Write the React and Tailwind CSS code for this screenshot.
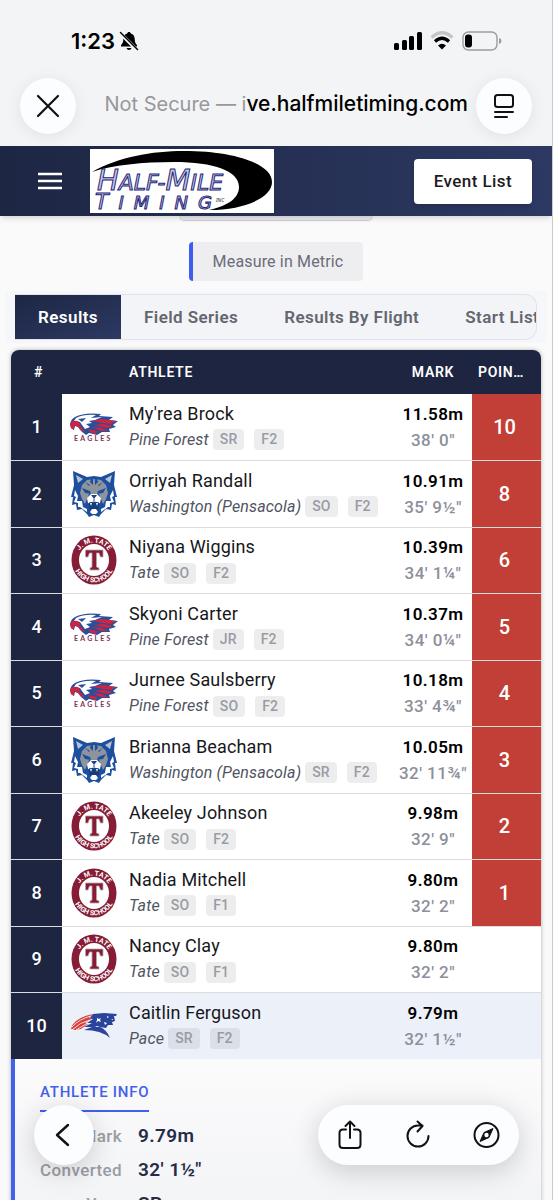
import { useState } from "react";

const results = [
  { place: 1, team: "eagles", name: "My'rea Brock", school: "Pine Forest", year: "SR", flight: "F2", mark: "11.58m", converted: "38' 0\"", points: 10 },
  { place: 2, team: "wildcats", name: "Orriyah Randall", school: "Washington (Pensacola)", year: "SO", flight: "F2", mark: "10.91m", converted: "35' 9½\"", points: 8 },
  { place: 3, team: "tate", name: "Niyana Wiggins", school: "Tate", year: "SO", flight: "F2", mark: "10.39m", converted: "34' 1¼\"", points: 6 },
  { place: 4, team: "eagles", name: "Skyoni Carter", school: "Pine Forest", year: "JR", flight: "F2", mark: "10.37m", converted: "34' 0¼\"", points: 5 },
  { place: 5, team: "eagles", name: "Jurnee Saulsberry", school: "Pine Forest", year: "SO", flight: "F2", mark: "10.18m", converted: "33' 4¾\"", points: 4 },
  { place: 6, team: "wildcats", name: "Brianna Beacham", school: "Washington (Pensacola)", year: "SR", flight: "F2", mark: "10.05m", converted: "32' 11¾\"", points: 3 },
  { place: 7, team: "tate", name: "Akeeley Johnson", school: "Tate", year: "SO", flight: "F2", mark: "9.98m", converted: "32' 9\"", points: 2 },
  { place: 8, team: "tate", name: "Nadia Mitchell", school: "Tate", year: "SO", flight: "F1", mark: "9.80m", converted: "32' 2\"", points: 1 },
  { place: 9, team: "tate", name: "Nancy Clay", school: "Tate", year: "SO", flight: "F1", mark: "9.80m", converted: "32' 2\"" },
  { place: 10, team: "pace", name: "Caitlin Ferguson", school: "Pace", year: "SR", flight: "F2", mark: "9.79m", converted: "32' 1½\"" },
];

const tabs = ["Results", "Field Series", "Results By Flight", "Start List"];

function EaglesLogo() {
  return (
    <svg className="w-12 h-12" viewBox="0 0 48 48" role="img" aria-label="Pine Forest Eagles">
      <path d="M0 21 Q1 16 5 14 Q14 9 31 11 L29 13 L43 14 L39 17 L48 18 L43 22 L46 24 L39 26 L40 29 L32 29 L27 32 L19 30 L16 32 L11 28 L8 24 L5 23 L4 27 L1 25 Z" fill="#284f9c" />
      <path d="M6 15 Q14 11 26 12 L21 15 L32 14 L25 17 L19 18 L22 20 L16 21 L20 24 L15 26 L12 22 L10 19 L4 18 Z" fill="#fff" />
      <path d="M8 16 L16 15 L12 19 Z" fill="#2c4f8f" />
      <path d="M0 21 Q2 17 8 18 L10 21 L9 22 L14 27 L13 29 L8 24 L4 22 L4 27 L1 25 Z" fill="#cf2440" />
      <path d="M22 18 L32 16 L46 18 L41 21 L33 20 Z M24 22 L33 21 L43 23 L38 25 L33 24 Z M22 24 L32 25 L38 28 L31 28 Z M18 26 L27 28 L26 31 L20 29 Z" fill="#d3243f" />
      <text x="4" y="38" fontSize="7" letterSpacing="2.200" fontFamily="Lato, sans-serif" fontWeight="700" fill="#7b3358">EAGLES</text>
    </svg>
  );
}

function WildcatsLogo() {
  return (
    <svg className="w-12 h-12" viewBox="0 0 48 48" role="img" aria-label="Washington Wildcats">
      <path d="M3 1 L17 7 L24 6 L31 7 L45 1 L44 15 L47 27 L45 27 L46 35 L42 34 L41 40 L36 39 L31 44 L29 47 L24 45 L19 47 L17 44 L12 39 L7 40 L6 34 L2 35 L3 27 L1 27 L4 15 Z" fill="#1c4f9f" />
      <path d="M6 5 L13 9 L8 13 Z M42 5 L35 9 L40 13 Z" fill="#b7c3d4" />
      <path d="M5 20 L8 26 L7 31 L12 31 L13 37 L17 39 L17 42 L10 37 L8 37 L8 33 L4 32 L6 27 L4 26 Z M43 20 L40 26 L41 31 L36 31 L35 37 L31 39 L31 42 L38 37 L40 37 L40 33 L44 32 L42 27 L44 26 Z" fill="#fff" />
      <path d="M17 10 L24 9 L31 10 L36 15 L38 23 L36 29 L33 34 L31 29 L29 24 L19 24 L17 29 L15 34 L12 29 L10 23 L12 15 Z" fill="#8e949c" />
      <path d="M21 9 h2 v6 l-3 -3z M27 9 h-2 v6 l3 -3z M12 18 l8 3 l1 3 l-6 -1z M36 18 l-8 3 l-1 3 l6 -1z M15 12 l5 3 l-1 1z M33 12 l-5 3 l1 1z" fill="#1c4f9f" />
      <path d="M21 24 h6 l4 4 l-1 5 l-3 1 h-6 l-3 -1 l-1 -5z" fill="#fff" />
      <path d="M21 25 h6 l-3 4z" fill="#194382" />
      <path d="M24 29 v2 M19 33 l5 -1 l5 1 l-1 6 l-2 2 h-4 l-2 -2z" fill="#153e7b" stroke="#153e7b" />
      <path d="M20 33 l1 3 l1 -3z M28 33 l-1 3 l-1 -3z M20 42 l2 -3 h4 l2 3 l-2 2 h-4z" fill="#fff" />
    </svg>
  );
}

function TateLogo() {
  return (
    <svg className="w-12 h-[50px]" viewBox="0 0 48 50" role="img" aria-label="J. M. Tate High School">
      <defs>
        <path id="tate-top" d="M7 25 A17 17.500 0 0 1 41 25" />
        <path id="tate-bottom" d="M2.500 25 A21.500 22.300 0 0 0 45.500 25" />
      </defs>
      <ellipse cx="24" cy="25" rx="22.500" ry="24.500" fill="#861c35" />
      <ellipse cx="24" cy="25" rx="15" ry="16" fill="#fff" />
      <text fontSize="7" fontWeight="700" fontFamily="Roboto, sans-serif" fill="#fff" textAnchor="middle">
        <textPath href="#tate-top" startOffset="50%">J. M. TATE</textPath>
      </text>
      <text fontSize="7" fontWeight="700" fontFamily="Roboto, sans-serif" fill="#fff" textAnchor="middle">
        <textPath href="#tate-bottom" startOffset="50%">HIGH SCHOOL</textPath>
      </text>
      <path d="M15.500 15 H33 V22 H30.500 L29 18 H26.500 V32 L29 33 V35 H20 V33 L22 32 V18 H19.500 L18 22 H15.500 Z" fill="#861c35" stroke="#b6a4aa" strokeWidth="0.800" />
    </svg>
  );
}

function PaceLogo() {
  return (
    <svg className="w-12 h-12" viewBox="0 0 48 48" role="img" aria-label="Pace Patriots">
      <path d="M1 27 Q3 16 23 12 L19 16 L23 16 L15 21 L18 22 L11 27 L5 28 Z" fill="#d9413d" />
      <path d="M2 25 Q9 17 21 14 M2 28 Q10 20 20 18 M6 28 L18 21" stroke="#fff" strokeWidth="0.800" fill="none" />
      <path d="M23 12 L34 11 L47 12 L46 14 L44 14 L45 19 L42 20 L43 23 L38 23 L36 26 L30 25 Q37 28 40 36 Q31 28 14 28 L22 25 L14 25 L22 21 L17 21 L23 17 L20 16 Z" fill="#2b449b" />
      <path d="M27 16 l2 1 l2 -1 l-1 2 l1 2 l-3 -1 l-2 2 l1 -3z M37 14 l2 1 l-2 1z M34 20 l3 1 l-2 2z M25 24 l5 0 l-3 1z M41 17 h2 v1z" fill="#fff" />
    </svg>
  );
}

function TeamLogo({ team }) {
  if (team === "eagles") return <EaglesLogo />;
  if (team === "wildcats") return <WildcatsLogo />;
  if (team === "tate") return <TateLogo />;
  return <PaceLogo />;
}

function HalfMileLogo() {
  return (
    <svg className="w-[184px] h-16 bg-white overflow-visible" viewBox="0 0 184 64" role="img" aria-label="Half-Mile Timing">
      <path d="M2 23 C28 8 62 2 94 2 C145 2 182 15 182 33 C182 49 154 61 119 61 C138 57 149 49 149 38 C149 22 124 13 84 13 C53 13 22 16 2 23 Z" fill="#000" />
      <g fontFamily="DejaVu Sans, sans-serif" fontStyle="italic" fill="#c9c9dc" stroke="#23237c" strokeWidth="1">
        <text x="7" y="41" fontSize="22">
          <tspan fontSize="29">H</tspan>ALF-<tspan fontSize="29">M</tspan>ILE
        </text>
        <text x="5" y="60" fontSize="18" letterSpacing="10">
          <tspan fontSize="22">T</tspan>IMING
        </text>
      </g>
      <text x="126" y="53" fontSize="5" fontStyle="italic" fontFamily="Noto Sans, sans-serif" fill="#222">INC</text>
    </svg>
  );
}

function StatusBar() {
  return (
    <div className="flex items-center justify-between pl-[71px] pr-[50px] pt-[26px]">
      <div className="flex items-center gap-1">
        <span className="text-[22px] leading-[30px] font-semibold text-black">1:23</span>
        <svg className="w-5 h-5" viewBox="0 0 20 20" fill="#000" aria-label="Silent">
          <path d="M10 1 C11 1 11.700 1.600 11.800 2.500 C14.500 3.300 15.600 5.500 15.700 8 C15.800 11.500 16.500 12.500 18 14 V15.500 H2 V14 C3.500 12.500 4.200 11.500 4.300 8 C4.400 5.500 5.500 3.300 8.200 2.500 C8.300 1.600 9 1 10 1 Z" />
          <path d="M7.500 17 h5 q-.6 2 -2.500 2 t-2.500 -2z" />
          <path d="M1 2 L18 19" stroke="#f3f4f6" strokeWidth="3.500" />
          <path d="M1.500 1.500 L18.500 18.500" stroke="#000" strokeWidth="1.500" strokeLinecap="round" />
        </svg>
      </div>
      <div className="flex items-center gap-2">
        <svg className="w-7 h-5" viewBox="0 0 28 20" fill="#000" aria-label="Signal">
          <rect x="0" y="12" width="5" height="7" rx="1.500" />
          <rect x="8" y="9" width="5" height="10" rx="1.500" />
          <rect x="15" y="5" width="5" height="14" rx="1.500" />
          <rect x="23" y="1" width="5" height="18" rx="1.500" />
        </svg>
        <svg className="w-6 h-5" viewBox="0 0 24 20" fill="none" aria-label="Wi-Fi">
          <path d="M1.500 6.500 Q12 -3 22.500 6.500" stroke="#c4c5c8" strokeWidth="3.200" />
          <path d="M5 10.500 Q12 4 19 10.500" stroke="#000" strokeWidth="3.200" />
          <path d="M8 14.500 Q12 11 16 14.500 L12 18.500 Z" fill="#000" />
        </svg>
        <svg className="w-10 h-5" viewBox="0 0 40 20" aria-label="Battery">
          <rect x="1" y="1" width="34" height="18" rx="5.500" fill="none" stroke="#9b9ca0" strokeWidth="1.400" />
          <rect x="3" y="3.500" width="7" height="13" rx="3" fill="#000" />
          <path d="M37 7 q2.500 .5 2.500 3 t-2.500 3z" fill="#9b9ca0" />
        </svg>
      </div>
    </div>
  );
}

function BrowserBar() {
  return (
    <div className="flex items-center justify-between px-5 pt-[22px]">
      <button aria-label="Close" className="w-14 h-14 shrink-0 rounded-full bg-[#fcfdff] shadow-[0_2px_16px_rgba(0,0,0,0.08)] flex items-center justify-center">
        <svg className="w-6 h-6" viewBox="0 0 24 24" fill="none" stroke="#111" strokeWidth="2.200" strokeLinecap="round">
          <path d="M2 2 L22 22 M22 2 L2 22" />
        </svg>
      </button>
      <p className="ml-auto mr-2 pb-1 text-[21px] leading-7 font-medium whitespace-nowrap text-black">
        <span className="text-xl font-normal text-[#97989c]">Not Secure — i</span>ve.halfmiletiming.com
      </p>
      <button aria-label="Page menu" className="w-14 h-14 shrink-0 rounded-full bg-[#fcfdff] shadow-[0_2px_16px_rgba(0,0,0,0.08)] flex items-center justify-center">
        <svg className="w-6 h-6" viewBox="0 0 24 24" fill="none" stroke="#111" strokeWidth="2" strokeLinecap="round">
          <rect x="3" y="1" width="18" height="12" rx="2.500" />
          <path d="M3 18 H21 M3 23 H15" />
        </svg>
      </button>
    </div>
  );
}

function ResultRow({ row }) {
  const selected = row.place === 10;
  return (
    <tr className={`odd:h-[66px] even:h-[67px] ${selected ? "bg-[#ecf0f9]" : "bg-white border-b border-[#dcdcde]"}`}>
      <td className="bg-[#1d2540] text-white text-lg font-medium text-center">{row.place}</td>
      <td className="pl-2"><TeamLogo team={row.team} /></td>
      <td className="pl-1 tracking-[0.01em]">
        <div className="text-lg leading-[26px] text-[#17181c] whitespace-nowrap">{row.name}</div>
        <div className="flex items-center text-base leading-[26px] whitespace-nowrap">
          <span className="italic text-[#50545f]">{row.school}</span>
          <span className="ml-1 px-[7px] rounded bg-black/7 text-sm leading-[21px] font-medium text-[#989ba5]">{row.year}</span>
          <span className="ml-[10px] px-[7px] rounded bg-black/7 text-sm leading-[21px] font-medium text-[#989ba5]">{row.flight}</span>
        </div>
      </td>
      <td className="text-center text-[17px] leading-[26px] tracking-wide whitespace-nowrap">
        <div className="font-semibold text-black">{row.mark}</div>
        <div className="font-medium text-[#8d909b]">{row.converted}</div>
      </td>
      <td className={`pr-1 text-center text-xl font-medium text-white ${row.points ? "bg-[#c13f37]" : ""}`}>{row.points}</td>
    </tr>
  );
}

function AthleteInfo() {
  return (
    <section className="border-l-4 border-[#4360ea] bg-linear-to-b from-[#fbfbfc] to-[#f1f2f4] pl-[25px] pt-[21px] pb-8">
      <h2 className="w-fit border-b-2 border-[#4360ea] pb-[6px] text-[15px] leading-6 font-medium tracking-wider text-[#4360ea]">ATHLETE INFO</h2>
      <dl className="mt-[7px] grid grid-cols-[82px_1fr] gap-x-4 leading-[34px] tracking-wide">
        <dt className="text-right text-[17px] font-medium text-[#9b9da5]">Mark</dt>
        <dd className="text-[19px] font-semibold text-[#262c47]">9.79m</dd>
        <dt className="text-right text-[17px] font-medium text-[#9b9da5]">Converted</dt>
        <dd className="text-[19px] font-semibold text-[#262c47]">32' 1½"</dd>
        <dt className="text-right text-[17px] font-medium text-[#9b9da5]">Year</dt>
        <dd className="text-[19px] font-semibold text-[#262c47]">SR</dd>
      </dl>
    </section>
  );
}

function BottomBar() {
  return (
    <div className="absolute inset-x-0 bottom-[35px] flex justify-between pl-[34px] pr-[33px]">
      <button aria-label="Back" className="w-[60px] h-[60px] rounded-full bg-[#fcfdff] shadow-[0_6px_28px_rgba(0,0,0,0.18)] flex items-center justify-center">
        <svg className="w-6 h-6" viewBox="0 0 24 24" fill="none" stroke="#111" strokeWidth="2.400" strokeLinecap="round" strokeLinejoin="round">
          <path d="M16 2 L5 12 L16 22" />
        </svg>
      </button>
      <div className="w-[201px] h-[60px] px-[17px] rounded-full bg-[#fcfdff] shadow-[0_6px_28px_rgba(0,0,0,0.18)] flex items-center justify-between">
        <button aria-label="Share">
          <svg className="w-[30px] h-[30px]" viewBox="0 0 30 30" fill="none" stroke="#111" strokeWidth="2" strokeLinecap="round" strokeLinejoin="round">
            <path d="M11 9.500 H8 Q4.500 9.500 4.500 13 V24.500 Q4.500 28 8 28 H22 Q25.500 28 25.500 24.500 V13 Q25.500 9.500 22 9.500 H19 M15 18 V1.500 M10.500 6 L15 1.500 L19.500 6" />
          </svg>
        </button>
        <button aria-label="Reload">
          <svg className="w-[30px] h-[30px]" viewBox="0 0 30 30" fill="none" stroke="#111" strokeWidth="2" strokeLinecap="round" strokeLinejoin="round">
            <path d="M24.500 16 A10.500 10.500 0 1 1 14 5.500 H18.500 M13.500 1.500 L18.500 6 L13.500 11.500" />
          </svg>
        </button>
        <button aria-label="Open in browser">
          <svg className="w-[30px] h-[30px]" viewBox="0 0 30 30" fill="none" stroke="#111" strokeWidth="2" strokeLinejoin="round">
            <circle cx="14.500" cy="15" r="12" />
            <path d="M21 8.500 L17 17.500 L8 21.500 L12 12.500 Z" fill="#111" strokeWidth="1" />
            <circle cx="14.500" cy="15" r="2.200" fill="#fff" stroke="none" />
          </svg>
        </button>
      </div>
    </div>
  );
}

export default function App() {
  const [tab, setTab] = useState("Results");

  return (
    <div className="relative h-screen overflow-hidden flex flex-col bg-[#fafafa] border-r border-[#c9cacd] font-['Roboto',sans-serif]">
      {/* Phone and browser chrome */}
      <header className="shrink-0 bg-[#f3f4f6] pb-3 font-['Inter',sans-serif]">
        <StatusBar />
        <BrowserBar />
      </header>

      {/* Site navigation */}
      <nav className="relative shrink-0 h-[70px] pl-[38px] pr-5 flex items-center bg-linear-to-r from-[#1d2643] to-[#2d3963] shadow-md">
        <button aria-label="Menu" className="mr-7">
          <svg className="w-6 h-6" viewBox="0 0 24 24" fill="none" stroke="#fff" strokeWidth="2.400">
            <path d="M0 5 H24 M0 12 H24 M0 19 H24" />
          </svg>
        </button>
        <a href="#home"><HalfMileLogo /></a>
        <a href="#events" className="ml-auto rounded bg-white px-5 text-[17px] leading-[45px] font-medium tracking-wide text-[#1c1c1e] shadow-md">Event List</a>
      </nav>

      <main className="flex-1 min-h-0 overflow-hidden">
        <div className="mx-auto w-[194px] h-[5px] rounded-b-xl border-b border-[#cfcfd6] bg-[#eaeaee]" />
        <div className="mt-[21px] flex justify-center">
          <button className="rounded border-l-4 border-[#3f5cf0] bg-[#eeeef1] px-5 text-base leading-[39px] tracking-[0.01em] text-[#6a6c77]">Measure in Metric</button>
        </div>

        <div className="mx-[5px] mt-[10px] bg-[#f6f7fa] px-[10px] py-[3px]">
          <div role="tablist" className="flex overflow-hidden rounded-r-xl border border-l-0 border-[#e2e3e8] bg-[#f3f4f7]">
            {tabs.map((name) => (
              <button
                key={name}
                role="tab"
                aria-selected={tab === name}
                onClick={() => setTab(name)}
                className={`shrink-0 px-[23px] text-[17px] leading-[44px] font-semibold tracking-wide ${
                  tab === name ? "bg-linear-to-br from-[#1d2643] to-[#2d3963] text-white" : "text-[#63666f]"
                }`}
              >
                {name}
              </button>
            ))}
          </div>
        </div>

        <div className="mx-[11px] mt-[7px] overflow-hidden rounded-t-lg shadow-[0_0_4px_rgba(0,0,0,0.3)]">
          <table className="w-full table-fixed border-collapse">
            <colgroup>
              <col className="w-[51px]" />
              <col className="w-[63px]" />
              <col />
              <col className="w-[78px]" />
              <col className="w-[69px]" />
            </colgroup>
            <thead>
              <tr className="h-11 bg-[#1d2540] text-sm text-white tracking-wider">
                <th className="pl-1 font-semibold">#</th>
                <th aria-label="Team" />
                <th className="pl-1 text-left font-semibold">ATHLETE</th>
                <th className="font-semibold">MARK</th>
                <th className="truncate pl-[6px] pr-3 text-left font-semibold">POINTS</th>
              </tr>
            </thead>
            <tbody>
              {results.map((row) => (
                <ResultRow key={row.place} row={row} />
              ))}
            </tbody>
          </table>
          <AthleteInfo />
        </div>
      </main>

      <BottomBar />
    </div>
  );
}
